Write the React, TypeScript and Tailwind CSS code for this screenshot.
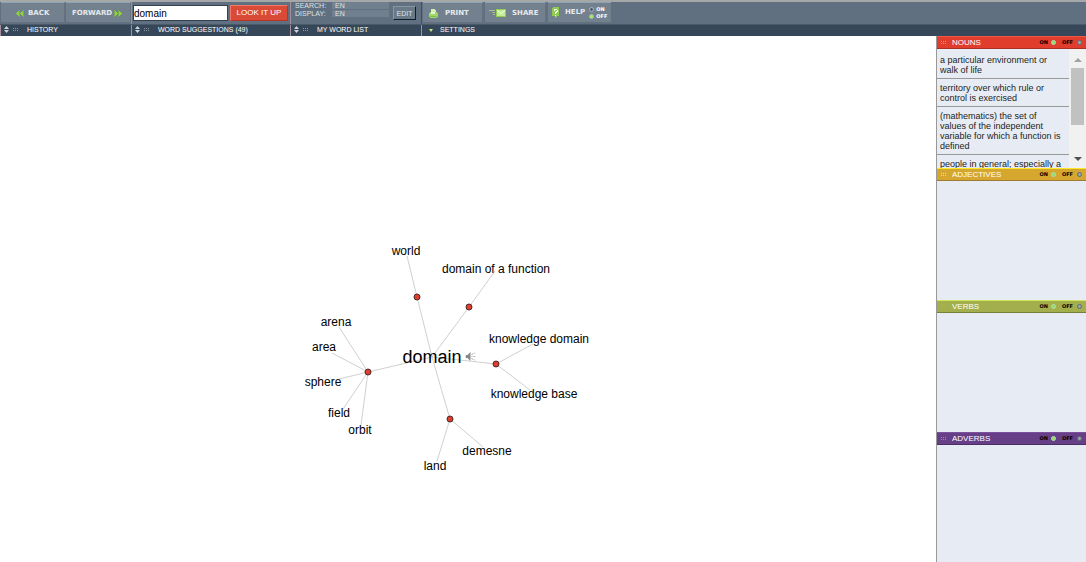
import { useState, type ReactNode } from 'react'

interface Point {
  x: number
  y: number
}

interface Word extends Point {
  text: string
  // where the connecting line stops, just short of the text
  end: Point
}

interface Meaning extends Point {
  words: Word[]
}

interface Panel {
  title: string
  bar: string
  dots: string
  definitions: string[]
}

const CENTER: Point = { x: 432, y: 321 }

const MEANINGS: Meaning[] = [
  { x: 417, y: 261, words: [{ text: 'world', x: 406, y: 215, end: { x: 407, y: 220 } }] },
  { x: 469, y: 271, words: [{ text: 'domain of a function', x: 496, y: 233, end: { x: 495, y: 235 } }] },
  {
    x: 496,
    y: 328,
    words: [
      { text: 'knowledge domain', x: 539, y: 303, end: { x: 533, y: 308 } },
      { text: 'knowledge base', x: 534, y: 358, end: { x: 530, y: 354 } },
    ],
  },
  {
    x: 450,
    y: 383,
    words: [
      { text: 'demesne', x: 487, y: 415, end: { x: 483, y: 411 } },
      { text: 'land', x: 435, y: 430, end: { x: 437, y: 425 } },
    ],
  },
  {
    x: 368,
    y: 336,
    words: [
      { text: 'arena', x: 336, y: 286, end: { x: 339, y: 291 } },
      { text: 'area', x: 324, y: 311, end: { x: 332, y: 317 } },
      { text: 'sphere', x: 323, y: 346, end: { x: 339, y: 343 } },
      { text: 'field', x: 339, y: 377, end: { x: 343, y: 373 } },
      { text: 'orbit', x: 360, y: 394, end: { x: 361, y: 389 } },
    ],
  },
]

const PANELS: Panel[] = [
  {
    title: 'NOUNS',
    bar: 'bg-[#e03d2c] border-t-[#ee5a49] border-b-[#a92f22]',
    dots: 'text-[#f0907f]',
    definitions: [
      'a particular environment or walk of life',
      'territory over which rule or control is exercised',
      '(mathematics) the set of values of the independent variable for which a function is defined',
      'people in general; especially a',
    ],
  },
  {
    title: 'ADJECTIVES',
    bar: 'bg-[#d5a72f] border-t-[#fbe628] border-b-[#a07a35]',
    dots: 'text-[#f5dc8c]',
    definitions: [],
  },
  {
    title: 'VERBS',
    bar: 'bg-[#a2af4c] border-t-[#d0e65c] border-b-[#75803a]',
    dots: 'text-[#d9a04a]',
    definitions: [],
  },
  {
    title: 'ADVERBS',
    bar: 'bg-[#663f86] border-t-[#7d509f] border-b-[#4b2e66]',
    dots: 'text-[#9f80b8]',
    definitions: [],
  },
]

const pixelFont = "font-['DejaVu_Sans',sans-serif] font-bold"

const DoubleArrow = ({ flip = false }: { flip?: boolean }) => (
  <svg
    className={flip ? 'shrink-0 rotate-180' : 'shrink-0'}
    width="8"
    height="7"
    viewBox="0 0 8 7"
    shapeRendering="crispEdges"
    fill="#8fd33c"
  >
    <path d="M0 3h1V2h1V1h1V0h1v7H3V6H2V5H1V4H0zM4 3h1V2h1V1h1V0h1v7H7V6H6V5H5V4H4z" />
    <path d="M3 0h1v7H3zM7 0h1v7H7z" fill="#79ab50" />
  </svg>
)

const Dots = () => (
  <svg width="6" height="4" viewBox="0 0 6 4" fill="currentColor" shapeRendering="crispEdges">
    <path d="M0 0h1v1H0zM2 0h1v1H2zM4 0h1v1H4zM0 2h1v1H0zM2 2h1v1H2zM4 2h1v1H4z" />
  </svg>
)

const PrintIcon = () => (
  <svg width="9" height="10" viewBox="0 0 9 10" shapeRendering="crispEdges">
    <path d="M2 1h4v1h1v3H2z" fill="#d3efb4" />
    <path d="M1 4h7v1h1v4H8v1H1V9H0V5h1z" fill="#9fd868" />
    <path d="M2 4h4v2H2z" fill="#e2f6cc" />
    <path d="M1 8h7v1H1z" fill="#7fc052" />
  </svg>
)

const ShareIcon = () => (
  <svg width="17" height="8" viewBox="0 0 17 8" shapeRendering="crispEdges">
    <path d="M0 1h6v1H0zM3 3h3v1H3zM4 5h2v1H4z" fill="#a5bf90" />
    <path d="M7 0h10v8H7z" fill="#8fce52" />
    <path d="M8 1h8v6H8z" fill="#c4ec98" />
    <path d="M8 1h1v1h1v1h1v1h2V3h1V2h1V1h1v1h-1v1h-1v1h-1v1h-2V4h-1V3H9V2H8z" fill="#f4fde9" />
  </svg>
)

const HelpIcon = () => (
  <svg width="7" height="11" viewBox="0 0 7 11" shapeRendering="crispEdges">
    <path d="M0 1h1V0h6v9H5v1H4v1H3V9H0z" fill="#8fcb50" />
    <path d="M2 2h3v1h1v2H5v1H4v1H3V5h1V4h1V3H3v1H2zM3 8h1v1H3z" fill="#f7ffee" />
  </svg>
)

const Speaker = () => (
  <svg width="10" height="9" viewBox="0 0 10 9" fill="none">
    <path d="M0 3h2l3-3v9L2 6H0z" fill="#888" />
    <path d="M6 3l2-2M6 4.500h1M8 4.500h2M6 6l2 2M9 1h1M9 8h1" stroke="#aaa" />
  </svg>
)

const ToolButton = ({ children, className }: { children: ReactNode; className: string }) => (
  <button
    className={`flex h-[21px] items-center border-t border-r border-b border-t-[#8fa3b5] border-r-[#64727f] border-b-[#64727f] bg-[#73818e] pt-px text-[7px] leading-none text-[#e6eaed] ${pixelFont} ${className}`}
  >
    {children}
  </button>
)

interface SwitchProps {
  name: string
  value: boolean
  onChange: (value: boolean) => void
}

const PanelSwitch = ({ name, value, onChange }: SwitchProps) => (
  <div className={`flex items-center gap-[6px] text-[5px] leading-none text-black ${pixelFont}`}>
    <label className="flex items-center gap-[3px]">
      ON
      <input
        type="radio"
        name={name}
        checked={value}
        onChange={() => onChange(true)}
        className="size-[5px] appearance-none rounded-full border border-[#b9d8b4] bg-[#6b7a80] checked:bg-[#8fe05c]"
      />
    </label>
    <label className="flex items-center gap-1">
      OFF
      <input
        type="radio"
        name={name}
        checked={!value}
        onChange={() => onChange(false)}
        className="size-[5px] appearance-none rounded-full border border-[#5b6b72] bg-[#9aa8a8] checked:bg-[#8fe05c]"
      />
    </label>
  </div>
)

const MenuItem = ({ children }: { children: ReactNode }) => (
  <button className="flex h-[11px] items-center border-l border-[#a58f9c] bg-[#36475a] pb-[2px] pl-[3px] text-left text-[7px] leading-none text-white">
    <svg className="mr-1" width="5" height="7" viewBox="0 0 5 7" fill="#cdd5dc">
      <path d="M0 3l2.500-3L5 3zM0 4h5L2.500 7z" />
    </svg>
    <span className="w-[14px] text-[#8b98a5]">
      <Dots />
    </span>
    {children}
  </button>
)

const WordMap = () => (
  <main className="relative flex-1 overflow-hidden bg-white text-[12px] leading-none text-black">
    <svg className="absolute inset-0 size-full">
      {MEANINGS.map((m) => (
        <g key={`${m.x}-${m.y}`} stroke="#d0d0d0">
          <line x1={CENTER.x} y1={CENTER.y} x2={m.x} y2={m.y} />
          {m.words.map((w) => (
            <line key={w.text} x1={m.x} y1={m.y} x2={w.end.x} y2={w.end.y} />
          ))}
          <circle cx={m.x} cy={m.y} r="3" fill="#e03d2c" stroke="#4a2a28" />
        </g>
      ))}
    </svg>
    {MEANINGS.flatMap((m) => m.words).map((w) => (
      <button
        key={w.text}
        className="absolute -translate-x-1/2 -translate-y-1/2 whitespace-nowrap"
        style={{ left: w.x, top: w.y }}
      >
        {w.text}
      </button>
    ))}
    <h1
      className="absolute -translate-x-1/2 -translate-y-1/2 text-[18px]"
      style={{ left: CENTER.x, top: CENTER.y }}
    >
      domain
      <button className="absolute top-1 left-full ml-1" aria-label="Pronounce">
        <Speaker />
      </button>
    </h1>
  </main>
)

const SidePanel = ({ panel }: { panel: Panel }) => {
  const [on, setOn] = useState(true)

  return (
    <section className="flex h-[132px] flex-col last:h-auto last:flex-1">
      <header className={`flex h-[13px] shrink-0 items-center border-t border-b pr-1 pl-1 ${panel.bar}`}>
        <span className={`w-[11px] ${panel.dots}`}>
          <Dots />
        </span>
        <h2 className="flex-1 text-[8px] leading-none text-white">{panel.title}</h2>
        <PanelSwitch name={panel.title} value={on} onChange={setOn} />
      </header>
      {panel.definitions.length > 0 && (
        <div className="flex min-h-0 flex-1">
          <ul className="flex-1 overflow-hidden pt-[2px] text-[9px] leading-[10px] text-[#222]">
            {panel.definitions.map((d) => (
              <li key={d} className="border-b border-[#999] pt-1 pr-1 pb-[3px] pl-[3px]">
                {d}
              </li>
            ))}
          </ul>
          {/* Scrollbar */}
          <div className="flex w-[17px] flex-col items-center bg-[#f1f1f1]">
            <svg width="17" height="19" viewBox="0 0 17 19" fill="#a3a3a3">
              <path d="M5 13l4-4 4 4z" />
            </svg>
            <div className="h-[57px] w-[13px] bg-[#c1c1c1]" />
            <svg className="mt-auto" width="17" height="17" viewBox="0 0 17 17" fill="#505050">
              <path d="M5 6h8l-4 4z" />
            </svg>
          </div>
        </div>
      )}
    </section>
  )
}

const App = () => {
  const [query, setQuery] = useState('domain')
  const [help, setHelp] = useState(false)

  return (
    <div className="flex min-h-screen flex-col font-['Liberation_Sans',Arial,sans-serif]">
      {/* Toolbar */}
      <div className="grid h-[25px] grid-cols-[131px_159px_131px_1fr] border-t-2 border-b border-t-[#a6a7a8] border-b-[#4b5a68] bg-[#607080]">
        <div className="flex gap-px pl-px">
          <ToolButton className="w-[64px] gap-1 pl-[15px]">
            <DoubleArrow />
            BACK
          </ToolButton>
          <ToolButton className="w-[65px] gap-[2px] pl-[6px]">
            FORWARD
            <DoubleArrow flip />
          </ToolButton>
        </div>
        <form
          className="flex items-center gap-[2px] border-l border-[#a58f9c] pl-px"
          onSubmit={(e) => e.preventDefault()}
        >
          <input
            aria-label="Word"
            value={query}
            onChange={(e) => setQuery(e.target.value)}
            className="h-4 w-[95px] border border-[#33414e] bg-white text-[10px] text-black outline-none"
          />
          <button className="h-4 w-[58px] border border-t-[#f07a66] border-r-[#b5352a] border-b-[#b5352a] border-l-[#f07a66] bg-[#d94a37] text-[8px] leading-none text-white">
            LOOK IT UP
          </button>
        </form>
        <div className="flex items-start border-l border-[#a58f9c] pl-1 text-[7px] leading-[7px] text-[#dde3e8]">
          <dl className="grid grid-cols-[37px_57px] gap-y-px">
            <dt>SEARCH:</dt>
            <dd className="bg-[#71808e] pl-[3px]">EN</dd>
            <dt>DISPLAY:</dt>
            <dd className="bg-[#71808e] pl-[3px]">EN</dd>
          </dl>
          <button className="mt-1 ml-1 h-[14px] w-[23px] border border-t-[#8797a5] border-r-[#121c26] border-b-[#121c26] border-l-[#8797a5] bg-[#697987]">
            EDIT
          </button>
        </div>
        <div className="flex gap-[2px] border-l border-[#43515f] pl-px">
          <ToolButton className="w-[60px] gap-[7px] pl-[6px]">
            <PrintIcon />
            PRINT
          </ToolButton>
          <ToolButton className="w-[61px] gap-[6px] pl-1">
            <ShareIcon />
            SHARE
          </ToolButton>
          <div className="flex h-[21px] w-[63px] items-center border-t border-b border-t-[#8fa3b5] border-b-[#64727f] bg-[#73818e]">
            <button className={`flex items-center gap-[6px] pl-1 text-[7px] leading-none text-[#e6eaed] ${pixelFont}`}>
              <HelpIcon />
              HELP
            </button>
            <div className={`ml-1 flex flex-col gap-px text-[5px] leading-[6px] text-white ${pixelFont}`}>
              <label className="flex items-center gap-[2px]">
                <input
                  type="radio"
                  name="help"
                  checked={help}
                  onChange={() => setHelp(true)}
                  className="size-[5px] appearance-none rounded-full border border-[#a9b5bf] bg-[#4f5d69] checked:bg-[#a5f04a]"
                />
                ON
              </label>
              <label className="flex items-center gap-[2px]">
                <input
                  type="radio"
                  name="help"
                  checked={!help}
                  onChange={() => setHelp(false)}
                  className="size-[5px] appearance-none rounded-full border border-[#a9b5bf] bg-[#4f5d69] checked:bg-[#a5f04a]"
                />
                OFF
              </label>
            </div>
          </div>
        </div>
      </div>

      {/* Menu bar */}
      <nav className="grid grid-cols-[131px_159px_131px_1fr] bg-[#36475a]">
        <MenuItem>HISTORY</MenuItem>
        <MenuItem>WORD SUGGESTIONS (49)</MenuItem>
        <MenuItem>MY WORD LIST</MenuItem>
        <button className="flex h-[11px] items-center gap-[7px] border-l border-[#a58f9c] pb-[2px] pl-[7px] text-left text-[7px] leading-none text-white">
          <svg width="4" height="4" viewBox="0 0 4 4" fill="#c6ea7a">
            <path d="M0 1h4L2 4z" />
          </svg>
          SETTINGS
        </button>
      </nav>

      <div className="flex flex-1">
        <WordMap />
        <aside className="flex w-[150px] flex-col border-l border-[#999] bg-[#e7ecf4]">
          {PANELS.map((panel) => (
            <SidePanel key={panel.title} panel={panel} />
          ))}
        </aside>
      </div>
    </div>
  )
}

export default App
